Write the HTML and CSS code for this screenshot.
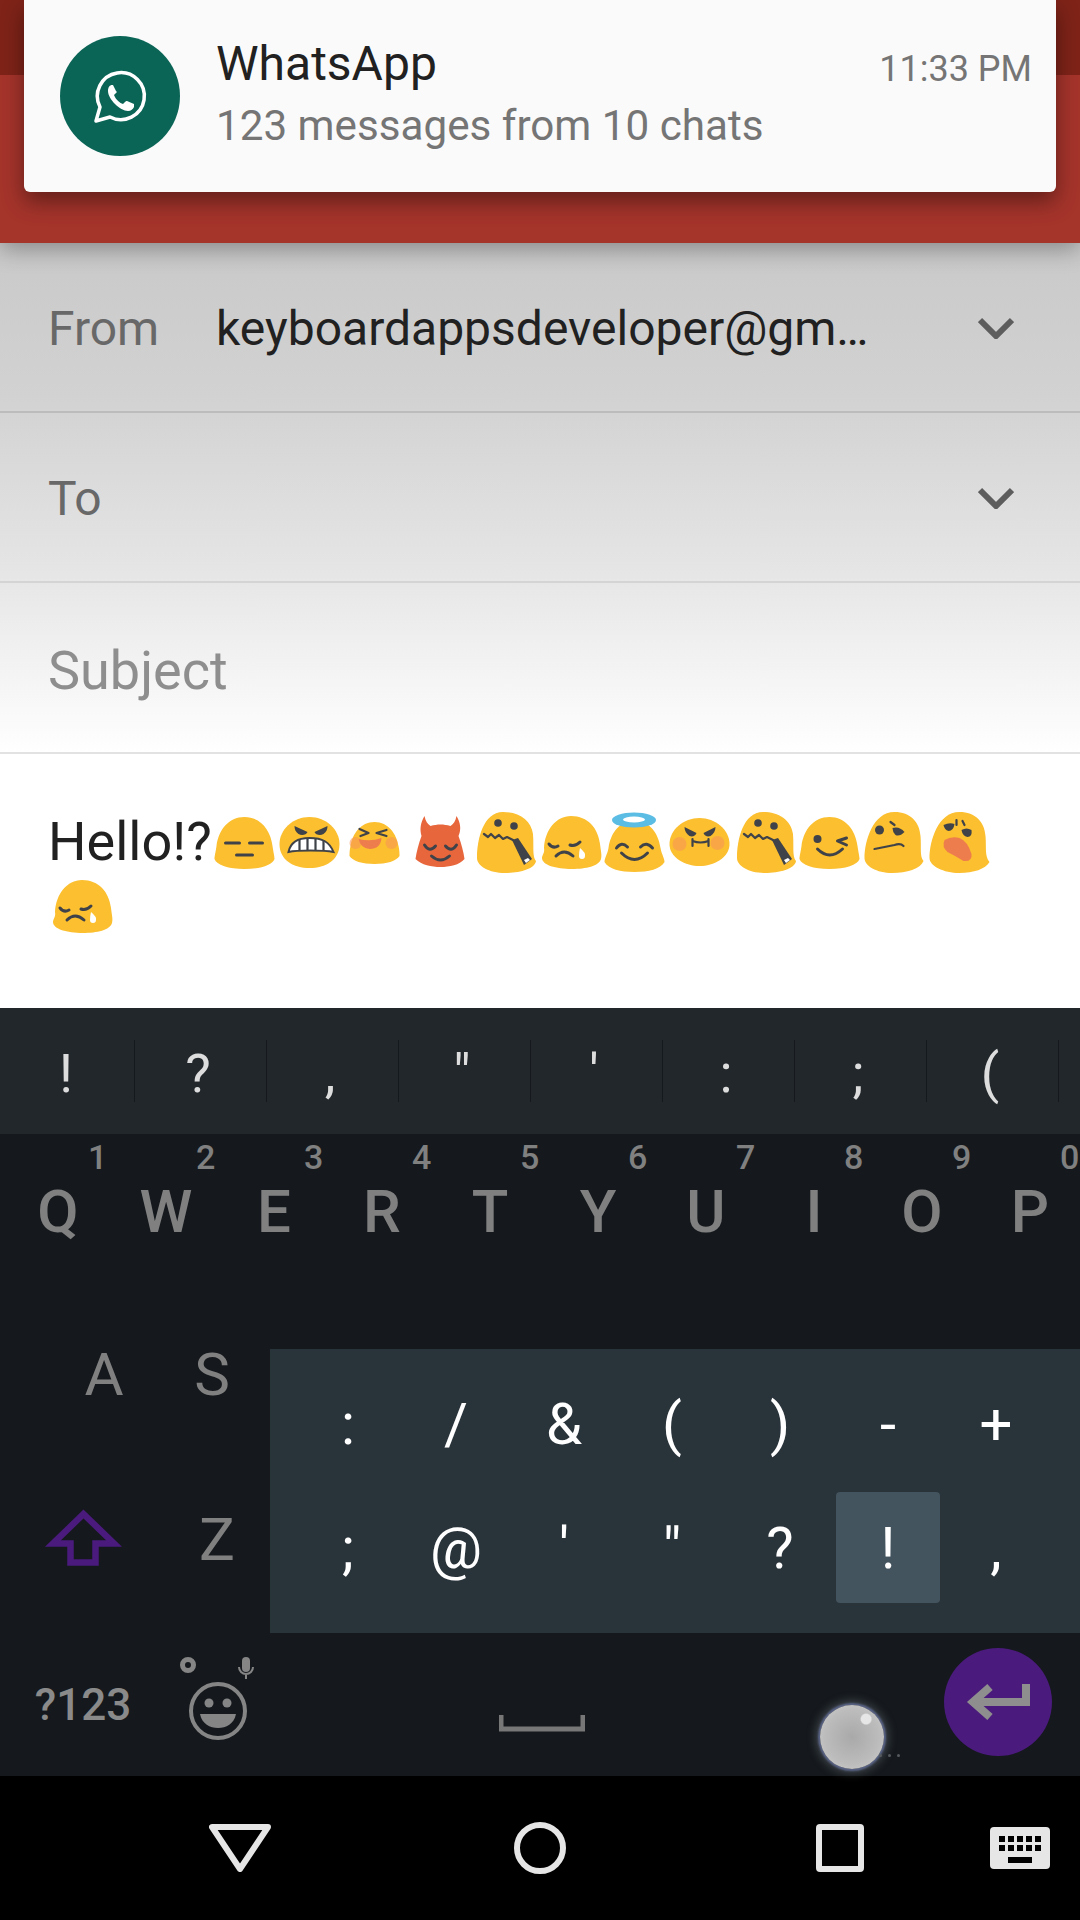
FILE: index.html
```html
<!DOCTYPE html>
<html lang="en">
<head>
    <meta charset="UTF-8">
    <meta name="viewport" content="width=device-width, initial-scale=1.0">
    <title>Compose</title>
    <link rel="stylesheet" href="styles.css">
</head>
<body>

    <!-- shared emoji shapes -->
    <svg class="sprite" aria-hidden="true">
        <symbol id="crying" viewBox="-2.5 0 65 62">
            <path class="blob" d="M29 4C46 4 56 16 58 32C59 40 60 43 59 47C57 54 44 57 30 57C14 57 0 53 0 46C0 43 3 41 2 36C3 18 14 4 29 4Z"/>
            <path class="line" d="M7 32Q11 37 16 34M28 33Q33 35 38 30M14 44Q22 36 31 44"/>
            <path class="tear" d="M38 36Q44 41 43 44a3 3 0 0 1-6 0Q37 40 38 36Z"/>
        </symbol>
        <symbol id="zipper" viewBox="-2.5 0 65 62">
            <path class="blob" d="M26 0C42 0 54 8 56 22C57 34 55 44 59 49C58 57 42 61 28 61C12 61 0 54 0 46C0 28 6 0 26 0Z"/>
            <circle class="dark" cx="21" cy="11" r="3.8"/>
            <circle class="dark" cx="37" cy="14" r="3.8"/>
            <path class="line thin" d="M7 22L11 25L14 22L18 26L22 23L26 27L30 25L36 28"/>
            <path class="dark" d="M35 28L41 26L55 47L47 53Z"/>
            <path class="tear" d="M47 48L51 46L53 48L49 51Z"/>
        </symbol>
    </svg>

    <div class="header">
        <div class="status-bar"></div>
        <div class="toolbar">Compose</div>
    </div>

    <div class="notification">
        <div class="notif-icon">
            <svg width="120" height="120" viewBox="0 0 120 120">
                <path class="wa-ring" d="M36 85L40 71A23.5 23.5 0 1 1 50 81Z"/>
                <path class="wa-phone" d="M52 49c-2 0-4 2-4 6c0 4 3 9 7 13c4 4 9 7 13 7c3 0 5-2 6-4c0-1 0-2 0-3l-7-3c-1 0-1 0-2 1l-2 2c-3-1-7-4-9-9l2-2c1-1 1-1 0-2l-3-6z"/>
            </svg>
        </div>
        <div class="notif-text">
            <div class="notif-title">WhatsApp</div>
            <div class="notif-sub">123 messages from 10 chats</div>
        </div>
        <div class="notif-time">11:33 PM</div>
    </div>

    <div class="form">
        <div class="form-row">
            <div class="form-label">From</div>
            <div class="form-value">keyboardappsdeveloper@gm…</div>
            <svg class="chevron" width="36" height="22" viewBox="0 0 36 22"><path d="M2 3L18 19L34 3"/></svg>
        </div>
        <div class="form-row row-to">
            <div class="form-label">To</div>
            <div class="form-value"></div>
            <svg class="chevron" width="36" height="22" viewBox="0 0 36 22"><path d="M2 3L18 19L34 3"/></svg>
        </div>
        <div class="form-row row-subject">
            <div class="form-label subject">Subject</div>
        </div>
    </div>

    <div class="message">
        <span class="hello">Hello!?</span><svg class="emoji" viewBox="-2.5 0 65 62">
            <path class="blob" d="M30 5C46 5 56 18 58 34C59 41 60 44 60 47C58 53 46 57 30 57C14 57 2 53 0 47C0 44 1 41 2 34C4 18 14 5 30 5Z"/>
            <path class="line" d="M11 31H25M35 31H48M22 43H38"/>
        </svg><svg class="emoji" viewBox="-2.5 0 65 62">
            <path class="blob" d="M30 5C47 5 60 18 60 32C60 48 46 56 30 56C14 56 0 48 0 32C0 18 13 5 30 5Z"/>
            <path class="dark" d="M15 14L28 20C27 23 22 24 19 22C16 20 15 17 15 14ZM48 14L35 20C36 23 41 24 44 22C47 20 48 17 48 14Z"/>
            <path class="teeth" d="M9 40C11 30 18 26 30 26C43 26 50 30 54 40C44 38 18 38 9 40Z"/>
            <path class="line thin" d="M20 28V38M28 27V38M36 27V38M44 29V38"/>
        </svg><svg class="emoji" viewBox="-2.5 0 65 62">
            <path class="blob" d="M30 10C44 10 52 22 54 34C55 38 55 42 55 44C52 49 42 52 30 52C18 52 8 49 5 44C5 42 5 38 6 34C8 22 16 10 30 10Z"/>
            <circle class="blush" cx="11" cy="31" r="6"/>
            <circle class="blush" cx="47" cy="31" r="6"/>
            <path class="line thin" d="M15 17L24 21L16 24M42 18L32 21L42 24"/>
            <path class="scream" d="M14 27Q26 30 37 26Q36 37 25 37Q16 36 14 27Z"/>
        </svg><svg class="emoji" viewBox="-2.5 0 65 62">
            <path class="devil" d="M15 4C11 11 10 17 12 24C9 32 7 40 6 47C12 53 22 55 31 55C40 55 50 53 55 47C54 40 52 32 49 24C52 17 51 11 47 4C46 9 44 12 41 14C34 12 28 12 21 14C18 12 16 9 15 4Z"/>
            <path class="line" d="M15 33Q20 41 26 34M36 34Q42 41 47 33M22 44Q31 52 40 44"/>
        </svg><svg class="emoji" viewBox="-2.5 0 65 62"><use href="#zipper"/></svg><svg class="emoji" viewBox="-2.5 0 65 62"><use href="#crying"/></svg><svg class="emoji" viewBox="-2.5 0 65 62">
            <path class="blob" d="M30 9C46 9 54 22 56 36C57 42 60 46 60 50C56 57 44 60 30 60C16 60 4 57 0 50C0 46 3 42 4 36C6 22 14 9 30 9Z"/>
            <ellipse class="halo" cx="29.5" cy="8" rx="22" ry="7.5"/>
            <ellipse class="tear" cx="29.5" cy="7.5" rx="11" ry="3"/>
            <path class="line" d="M12 36Q17 29 23 35M36 35Q42 29 48 36M17 41Q30 54 43 41"/>
        </svg><svg class="emoji" viewBox="-2.5 0 65 62">
            <path class="blob" d="M30 6C46 6 60 18 60 32C60 46 44 54 30 54C16 54 0 46 0 32C0 18 14 6 30 6Z"/>
            <circle class="blush" cx="10" cy="32" r="7"/>
            <circle class="blush" cx="48" cy="31" r="7"/>
            <path class="dark" d="M15 15L27 21C26 24 23 25 20 24C17 22 15 19 15 15ZM46 15L34 21C35 24 38 25 41 24C44 22 46 19 46 15Z"/>
            <path class="line thin" d="M23 27V34M39 27V34M23 29Q31 32 39 29"/>
        </svg><svg class="emoji" viewBox="-2.5 0 65 62"><use href="#zipper"/></svg><svg class="emoji" viewBox="-2.5 0 65 62">
            <path class="blob" d="M30 5C46 5 56 18 58 34C59 41 60 44 60 47C58 53 46 57 30 57C14 57 2 53 0 47C0 44 1 41 2 34C4 18 14 5 30 5Z"/>
            <circle class="dark" cx="18" cy="27" r="4"/>
            <path class="line" d="M47 26L38 29L47 33M18 37Q30 49 43 37"/>
        </svg><svg class="emoji" viewBox="-2.5 0 65 62">
            <path class="blob" d="M30 0C46 0 55 10 56 24C57 36 55 44 59 49C56 57 42 61 28 61C12 61 0 54 0 46C0 30 8 0 30 0Z"/>
            <circle class="dark" cx="15" cy="18" r="4.5"/>
            <path class="dark" d="M28 16Q35 14 40 20Q35 25 31 23Q28 20 28 16Z"/>
            <path class="line thin" d="M26 10L30 13M10 37L30 33Q36 31 39 34"/>
        </svg><svg class="emoji" viewBox="-2.5 0 65 62">
            <path class="blob" d="M30 0C46 0 55 10 56 24C57 36 55 44 60 50C56 57 44 61 30 61C14 61 0 54 0 46C0 30 8 0 30 0Z"/>
            <path class="dark" d="M14 13Q20 10 25 12Q24 19 19 19Q15 18 14 13ZM32 18Q37 15 42 18Q43 25 38 25Q33 24 32 18Z"/>
            <path class="line thin" d="M27 8V13M33 9L35 13"/>
            <path class="scream" d="M15 28Q22 24 30 26Q38 29 42 42Q43 50 34 49Q26 44 18 40Q12 35 15 28Z"/>
        </svg><svg class="emoji" viewBox="-2.5 0 65 62"><use href="#crying"/></svg>
    </div>

    <div class="keyboard">
        <div class="suggestions">
            <div class="suggestion">!</div>
            <div class="suggestion">?</div>
            <div class="suggestion">,</div>
            <div class="suggestion">"</div>
            <div class="suggestion">'</div>
            <div class="suggestion">:</div>
            <div class="suggestion">;</div>
            <div class="suggestion">(</div>
        </div>

        <div class="keys">
            <div class="key-row row-top">
                <div class="key"><span class="hint">1</span>Q</div>
                <div class="key"><span class="hint">2</span>W</div>
                <div class="key"><span class="hint">3</span>E</div>
                <div class="key"><span class="hint">4</span>R</div>
                <div class="key"><span class="hint">5</span>T</div>
                <div class="key"><span class="hint">6</span>Y</div>
                <div class="key"><span class="hint">7</span>U</div>
                <div class="key"><span class="hint">8</span>I</div>
                <div class="key"><span class="hint">9</span>O</div>
                <div class="key"><span class="hint">0</span>P</div>
            </div>
            <div class="key-row row-home">
                <div class="key">A</div>
                <div class="key">S</div>
            </div>
            <div class="key-row row-shift">
                <div class="key shift-key">
                    <svg width="80" height="62" viewBox="0 0 80 62"><path d="M41.5 5L72 34.5H53.5V53.5H28.5V34.5H11Z"/></svg>
                </div>
                <div class="key">Z</div>
            </div>
            <div class="key-row row-bottom">
                <div class="key symbols-key">?123</div>
                <div class="key emoji-key">
                    <svg width="104" height="92" viewBox="0 0 104 92">
                        <circle class="key-ring bold" cx="22" cy="9" r="5.5"/>
                        <path class="key-fill" d="M80 1a4 4 0 0 1 4 4v7a4 4 0 0 1-8 0v-7a4 4 0 0 1 4-4Z"/>
                        <path class="key-ring thin" d="M73 11a7 7 0 0 0 14 0M80 18v5"/>
                        <circle class="key-ring" cx="52" cy="55" r="27"/>
                        <circle class="key-fill" cx="43" cy="47" r="4.5"/>
                        <circle class="key-fill" cx="61" cy="47" r="4.5"/>
                        <path class="key-fill" d="M34 58H70C68 68 60 72 52 72C44 72 36 68 34 58Z"/>
                    </svg>
                </div>
                <div class="key space-key">
                    <svg width="86" height="18" viewBox="0 0 86 18"><path d="M2 1V15H84V1"/></svg>
                </div>
                <div class="key"></div>
                <div class="key">
                    <div class="enter-key">
                        <svg width="64" height="40" viewBox="0 0 64 40"><path d="M60 2V20H8M24 5L7 20L24 35"/></svg>
                    </div>
                </div>
            </div>
        </div>

        <!-- long press popup -->
        <div class="popup">
            <div class="popup-key">:</div>
            <div class="popup-key">/</div>
            <div class="popup-key">&amp;</div>
            <div class="popup-key">(</div>
            <div class="popup-key">)</div>
            <div class="popup-key">-</div>
            <div class="popup-key">+</div>
            <div class="popup-key">;</div>
            <div class="popup-key">@</div>
            <div class="popup-key">'</div>
            <div class="popup-key">"</div>
            <div class="popup-key">?</div>
            <div class="popup-key active">!</div>
            <div class="popup-key">,</div>
        </div>

        <div class="ball"></div>
        <div class="ball-dots"><span></span><span></span><span></span></div>
    </div>

    <div class="nav-bar">
        <svg width="62" height="48" viewBox="0 0 62 48"><path class="nav-line" d="M3 3H59L31 45Z"/></svg>
        <svg width="52" height="52" viewBox="0 0 52 52"><circle class="nav-line" cx="26" cy="26" r="23"/></svg>
        <svg width="48" height="48" viewBox="0 0 48 48"><rect class="nav-line" x="3" y="3" width="42" height="42" rx="1"/></svg>
        <svg width="60" height="42" viewBox="0 0 60 42">
            <rect class="nav-fill" width="60" height="42" rx="4"/>
            <path class="nav-holes" d="M9 9h6v6h-6zM18 9h6v6h-6zM27 9h6v6h-6zM36 9h6v6h-6zM45 9h6v6h-6zM9 18h6v6h-6zM18 18h6v6h-6zM27 18h6v6h-6zM36 18h6v6h-6zM45 18h6v6h-6zM18 30h24v6h-24z"/>
        </svg>
    </div>

</body>
</html>
```

FILE: styles.css
```css
body {
    font-family: Roboto, "Liberation Sans", sans-serif;
    margin: 0;
    padding: 0;
    width: 1080px;
    height: 1920px;
    overflow: hidden;
    position: relative;
    background-color: #ffffff;
}

.sprite {
    position: absolute;
    width: 0;
    height: 0;
}

/* header */
.header {
    position: relative;
    height: 243px;
    background-color: #a5342b;
    box-shadow: 0 6px 22px rgba(0, 0, 0, 0.32);
}

.status-bar {
    height: 75px;
    background-color: #7f2318;
}

/* mostly hidden by the notification, only the p tail shows */
.toolbar {
    padding: 82px 0 0 233px;
    font-size: 38px;
    line-height: 28px;
    color: #d8c8c6;
}

/* heads up notification */
.notification {
    position: absolute;
    left: 24px;
    top: 0;
    width: 1032px;
    height: 192px;
    box-sizing: border-box;
    padding: 0 24px 0 36px;
    display: flex;
    background-color: #fafafa;
    border-radius: 0 0 6px 6px;
    box-shadow: 0 10px 22px rgba(0, 0, 0, 0.4);
}

.notif-icon {
    width: 120px;
    height: 120px;
    margin-top: 36px;
    border-radius: 50%;
    background-color: #0b6557;
}

.wa-ring {
    fill: none;
    stroke: #ffffff;
    stroke-width: 3.5;
    stroke-linejoin: round;
}

.wa-phone {
    fill: #ffffff;
}

.notif-text {
    flex: 1;
    margin-left: 36px;
}

.notif-title {
    margin-top: 36px;
    font-size: 48px;
    line-height: 56px;
    color: #212121;
}

.notif-sub {
    margin-top: 6px;
    font-size: 42.2px;
    line-height: 56px;
    color: #757575;
}

.notif-time {
    margin-top: 45px;
    font-size: 36px;
    line-height: 48px;
    color: #757575;
}

/* form */
.form {
    height: 511px;
    background: linear-gradient(#c9c9c9, #d2d2d2 30%, #e4e4e4 62%, #ffffff 100%);
}

.form-row {
    height: 170px;
    box-sizing: border-box;
    padding: 2px 48px 0;
    display: flex;
    align-items: center;
    border-bottom: 2px solid #bcbcbc;
    font-size: 48px;
}

.row-to {
    border-bottom-color: #d4d4d4;
}

.row-subject {
    height: 171px;
    padding-top: 5px;
    border-bottom-color: #e2e2e2;
}

.form-label {
    width: 168px;
    color: #686868;
}

.form-label.subject {
    width: auto;
    color: #8e8e8e;
    font-size: 54px;
}

.form-value {
    flex: 1;
    color: #212121;
    white-space: nowrap;
}

.chevron {
    margin-right: 18px;
}

.chevron path {
    fill: none;
    stroke: #5d5d5d;
    stroke-width: 6;
}

/* message body */
.message {
    height: 254px;
    box-sizing: border-box;
    padding: 56px 48px 0;
    font-size: 54px;
    line-height: 63px;
    color: #212121;
}

.emoji {
    width: 65px;
    height: 62px;
    vertical-align: -14px;
}

.blob { fill: #fbbf2f; }
.dark { fill: #3f4349; }
.tear { fill: #ffffff; }
.teeth { fill: #ffffff; stroke: #3f4349; stroke-width: 2; }
.devil { fill: #e8663c; }
.halo { fill: #5bbce4; }
.blush { fill: #f7935a; opacity: 0.55; }
.scream { fill: #ee7d4d; }

.line {
    fill: none;
    stroke: #3f4349;
    stroke-width: 3;
    stroke-linecap: round;
    stroke-linejoin: round;
}

.line.thin {
    stroke-width: 2.2;
}

/* keyboard */
.keyboard {
    position: relative;
    height: 768px;
    background-color: #15191d;
    color: #808080;
}

.suggestions {
    height: 126px;
    box-sizing: border-box;
    padding-left: 3px;
    display: flex;
    align-items: center;
    background-color: #22272b;
}

.suggestion {
    width: 132px;
    height: 62px;
    padding-right: 5px;
    line-height: 68px;
    text-align: center;
    font-size: 54px;
    color: #dddddd;
    box-sizing: border-box;
    border-right: 1px solid #15191d;
}

.key-row {
    display: grid;
    font-size: 60px;
}

.key {
    position: relative;
    display: flex;
    align-items: center;
    justify-content: center;
}

.hint {
    position: absolute;
    left: 84px;
    top: 3px;
    font-size: 34px;
    line-height: 40px;
}

.row-top {
    height: 158px;
    box-sizing: border-box;
    padding: 0 0 4px 4px;
    grid-template-columns: repeat(10, 108px);
    font-weight: 500;
}

.row-home {
    height: 165px;
    grid-template-columns: repeat(2, 108px);
    padding-left: 50px;
}

.row-shift {
    height: 165px;
    grid-template-columns: 163px 108px;
}

.shift-key svg path {
    fill: none;
    stroke: #4a1a7c;
    stroke-width: 6.5;
}

.row-bottom {
    height: 154px;
    box-sizing: border-box;
    padding-top: 6px;
    grid-template-columns: 166px 104px 544px 130px 108px;
}

.symbols-key {
    padding-top: 6px;
    font-size: 44px;
    font-weight: 500;
    color: #8a8a8a;
}

.key-ring {
    fill: none;
    stroke: #858585;
    stroke-width: 4;
}

.key-ring.thin {
    stroke-width: 2;
}

.key-ring.bold {
    stroke-width: 5;
}

.key-fill {
    fill: #858585;
}

.space-key svg {
    margin-top: 42px;
}

.space-key path {
    fill: none;
    stroke: #777777;
    stroke-width: 5;
}

.enter-key {
    width: 108px;
    height: 108px;
    border-radius: 50%;
    background-color: #4a1a7c;
    display: flex;
    align-items: center;
    justify-content: center;
}

.enter-key path {
    fill: none;
    stroke: #8e8e8e;
    stroke-width: 8;
}

.popup {
    position: absolute;
    left: 270px;
    top: 341px;
    width: 810px;
    height: 284px;
    box-sizing: border-box;
    padding: 13px 0 0 24px;
    display: grid;
    grid-template-columns: repeat(7, 108px);
    grid-template-rows: 124px 111px;
    row-gap: 6px;
    justify-items: center;
    background-color: #29333a;
}

.popup-key {
    width: 104px;
    display: flex;
    align-items: center;
    justify-content: center;
    font-size: 58px;
    color: #ffffff;
    border-radius: 4px;
}

.popup-key.active {
    background-color: #44545e;
}

.ball {
    position: absolute;
    left: 820px;
    top: 697px;
    width: 64px;
    height: 64px;
    border-radius: 50%;
    background: radial-gradient(circle at 72% 22%, #e6e6e6 0, #e6e6e6 7%, transparent 9%),
                radial-gradient(circle, #a9a9a9 0, #bcbcbc 60%, #d2d2d2 100%);
    box-shadow: 0 0 2px 2px #5a6488, 0 0 10px 4px rgba(150, 160, 170, 0.35);
}

.ball-dots {
    position: absolute;
    left: 879px;
    top: 746px;
    display: flex;
    gap: 6px;
}

.ball-dots span {
    width: 3px;
    height: 3px;
    border-radius: 50%;
    background-color: #555a5e;
}

/* nav bar */
.nav-bar {
    height: 144px;
    box-sizing: border-box;
    padding-left: 90px;
    display: grid;
    grid-template-columns: 300px 300px 300px 60px;
    justify-items: center;
    align-items: center;
    background-color: #000000;
}

.nav-line {
    fill: none;
    stroke: #e6e6e6;
    stroke-width: 6;
    stroke-linejoin: round;
}

.nav-fill {
    fill: #e6e6e6;
}

.nav-holes {
    fill: #000000;
}
```
